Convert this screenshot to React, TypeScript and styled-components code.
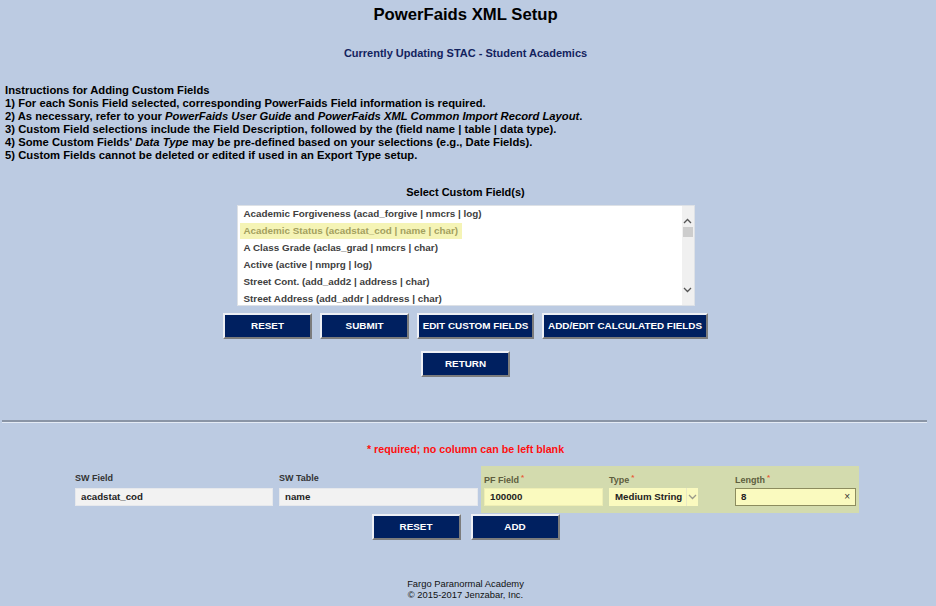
import styled, { createGlobalStyle } from "styled-components";

const GlobalStyle = createGlobalStyle`
  html, body {
    margin: 0;
    padding: 0;
    background: #bccbe2;
  }
  body {
    font-family: "Liberation Sans", Arial, sans-serif;
  }
`;

const Page = styled.div`
  width: 931px;
  min-height: 606px;
  background: #bccbe2;
  padding-top: 5px;
  box-sizing: border-box;
`;

const Title = styled.h1`
  margin: 0;
  text-align: center;
  font-size: 16.7px;
  line-height: 20px;
  font-weight: 700;
  color: #000;
`;

const Subtitle = styled.h2`
  margin: 22px 0 0 0;
  text-align: center;
  font-size: 11px;
  line-height: 13px;
  font-weight: 700;
  color: #13235e;
`;

const Instructions = styled.div`
  margin: 24px 0 0 5px;
  font-size: 11.25px;
  line-height: 13px;
  font-weight: 700;
  color: #000;

  em {
    font-style: italic;
  }
`;

const SectionLabel = styled.div`
  margin-top: 24px;
  text-align: center;
  font-size: 11px;
  line-height: 13px;
  font-weight: 700;
  color: #000;
`;

const ListBox = styled.div`
  margin: 5.5px auto 0;
  width: 458px;
  height: 101px;
  box-sizing: border-box;
  border: 1px solid #dde1e6;
  background: #fff;
  display: flex;
`;

const ListItems = styled.div`
  flex: 1;
  padding: 0 0 0 2px;
`;

const ListItem = styled.div`
  height: 17px;
  display: flex;
  align-items: center;
`;

const ItemText = styled.span<{ $selected?: boolean }>`
  font-size: 9.85px;
  font-weight: 700;
  line-height: 16px;
  padding: 0 4px;
  color: ${(p) => (p.$selected ? "#a3a05e" : "#404040")};
  background: ${(p) => (p.$selected ? "#f5f4b6" : "transparent")};
`;

const ScrollBar = styled.div`
  width: 12px;
  background: #f0f0f0;
  display: flex;
  flex-direction: column;
  align-items: center;
  padding: 12px 0;
  box-sizing: border-box;
`;

const ScrollThumb = styled.div`
  width: 10px;
  height: 10px;
  margin-top: 3px;
  background: #cdcdcd;
`;

const ScrollSpacer = styled.div`
  flex: 1;
`;

const ButtonRow = styled.div<{ $top: number; $gap?: number }>`
  display: flex;
  justify-content: center;
  gap: ${(p) => p.$gap ?? 8}px;
  margin-top: ${(p) => p.$top}px;
`;

const Button = styled.button<{ $w?: number }>`
  width: ${(p) => p.$w ?? 89}px;
  height: 26px;
  box-sizing: border-box;
  padding: 0;
  background: #002060;
  color: #fff;
  font-family: "Liberation Sans", Arial, sans-serif;
  font-size: 9.9px;
  font-weight: 700;
  border-style: solid;
  border-width: 2px;
  border-color: #eef0f5 #7c7c7c #7c7c7c #eef0f5;
  cursor: pointer;
`;

const Rule = styled.hr`
  margin: 43px 4px 0 2px;
  height: 0;
  border: 0;
  border-top: 2px solid #8a95a6;
  border-bottom: 1px solid #e4ebf5;
`;

const Required = styled.div`
  margin-top: 20.5px;
  text-align: center;
  font-size: 10.7px;
  line-height: 13px;
  font-weight: 700;
  color: #ff1010;
`;

const FormGrid = styled.div`
  margin: 9.5px auto 0;
  width: 787px;
  display: grid;
  grid-template-columns: 204px 205px 125px 126px 127px;
`;

const Cell = styled.div<{ $hl?: boolean }>`
  padding: 5px 3px 7px;
  background: ${(p) => (p.$hl ? "#d3dbae" : "transparent")};
  display: flex;
  flex-direction: column;
  gap: 3px;
`;

const Label = styled.div<{ $hl?: boolean }>`
  height: 14px;
  line-height: 14px;
  font-size: 9px;
  font-weight: 700;
  color: ${(p) => (p.$hl ? "#5e5e3e" : "#333")};
`;

const Star = styled.span`
  color: #e8603c;
  font-size: 8px;
  vertical-align: 3px;
  margin-left: 2px;
`;

const Field = styled.div<{ $variant?: "grey" | "yellow" | "boxed" }>`
  height: 18px;
  box-sizing: border-box;
  display: flex;
  align-items: center;
  padding: 0 5px;
  font-size: 9.7px;
  font-weight: 700;
  color: #222;
  background: ${(p) => (p.$variant === "grey" ? "#f2f2f2" : "#fafabf")};
  border: 1px solid
    ${(p) =>
      p.$variant === "boxed"
        ? "#8c8c5e"
        : p.$variant === "grey"
        ? "#e6e8ec"
        : "#eeeeb4"};
`;

const FieldValue = styled.span`
  flex: 1;
  white-space: nowrap;
  overflow: hidden;
`;

const Clear = styled.span`
  font-size: 10px;
  font-weight: 400;
  color: #333;
`;

const Select = styled.div`
  width: 89px;
  height: 18px;
  box-sizing: border-box;
  display: flex;
  background: #fafabf;
  font-size: 9.7px;
  font-weight: 700;
  color: #222;
`;

const SelectText = styled.span`
  flex: 1;
  overflow: hidden;
  white-space: nowrap;
  padding-left: 6px;
  line-height: 18px;
`;

const SelectArrow = styled.span`
  width: 11px;
  border-left: 1px solid #e8e8c4;
  display: flex;
  align-items: center;
  justify-content: center;
`;

const Footer = styled.div`
  margin-top: 38.5px;
  text-align: center;
  font-size: 9.4px;
  line-height: 11px;
  color: #111;
`;

const Chevron = ({ up, color = "#555" }: { up?: boolean; color?: string }) => (
  <svg width="9" height="6" viewBox="0 0 9 6">
    <path
      d={up ? "M1 5 L4.5 1.5 L8 5" : "M1 1 L4.5 4.5 L8 1"}
      fill="none"
      stroke={color}
      strokeWidth="1.3"
    />
  </svg>
);

const customFields = [
  "Academic Forgiveness (acad_forgive | nmcrs | log)",
  "Academic Status (acadstat_cod | name | char)",
  "A Class Grade (aclas_grad | nmcrs | char)",
  "Active (active | nmprg | log)",
  "Street Cont. (add_add2 | address | char)",
  "Street Address (add_addr | address | char)",
];

export default function App() {
  return (
    <Page>
      <GlobalStyle />
      <Title>PowerFaids XML Setup</Title>
      <Subtitle>Currently Updating STAC - Student Academics</Subtitle>

      <Instructions>
        Instructions for Adding Custom Fields
        <br />
        1) For each Sonis Field selected, corresponding PowerFaids Field information is required.
        <br />
        2) As necessary, refer to your <em>PowerFaids User Guide</em> and{" "}
        <em>PowerFaids XML Common Import Record Layout</em>.
        <br />
        3) Custom Field selections include the Field Description, followed by the (field name | table | data type).
        <br />
        4) Some Custom Fields' <em>Data Type</em> may be pre-defined based on your selections (e.g., Date Fields).
        <br />
        5) Custom Fields cannot be deleted or edited if used in an Export Type setup.
      </Instructions>

      <SectionLabel>Select Custom Field(s)</SectionLabel>
      <ListBox>
        <ListItems>
          {customFields.map((f, i) => (
            <ListItem key={f}>
              <ItemText $selected={i === 1}>{f}</ItemText>
            </ListItem>
          ))}
        </ListItems>
        <ScrollBar>
          <Chevron up />
          <ScrollThumb />
          <ScrollSpacer />
          <Chevron />
        </ScrollBar>
      </ListBox>

      <ButtonRow $top={7}>
        <Button>RESET</Button>
        <Button>SUBMIT</Button>
        <Button $w={117}>EDIT CUSTOM FIELDS</Button>
        <Button $w={166}>ADD/EDIT CALCULATED FIELDS</Button>
      </ButtonRow>
      <ButtonRow $top={12}>
        <Button>RETURN</Button>
      </ButtonRow>

      <Rule />

      <Required>* required; no column can be left blank</Required>

      <FormGrid>
        <Cell>
          <Label>SW Field</Label>
          <Field $variant="grey">
            <FieldValue>acadstat_cod</FieldValue>
          </Field>
        </Cell>
        <Cell>
          <Label>SW Table</Label>
          <Field $variant="grey">
            <FieldValue>name</FieldValue>
          </Field>
        </Cell>
        <Cell $hl>
          <Label $hl>
            PF Field<Star>*</Star>
          </Label>
          <Field $variant="yellow">
            <FieldValue>100000</FieldValue>
          </Field>
        </Cell>
        <Cell $hl>
          <Label $hl>
            Type<Star>*</Star>
          </Label>
          <Select>
            <SelectText>Medium String</SelectText>
            <SelectArrow>
              <Chevron color="#9a9a8a" />
            </SelectArrow>
          </Select>
        </Cell>
        <Cell $hl>
          <Label $hl>
            Length<Star>*</Star>
          </Label>
          <Field $variant="boxed">
            <FieldValue>8</FieldValue>
            <Clear>×</Clear>
          </Field>
        </Cell>
      </FormGrid>

      <ButtonRow $top={1} $gap={10}>
        <Button>RESET</Button>
        <Button>ADD</Button>
      </ButtonRow>

      <Footer>
        Fargo Paranormal Academy
        <br />© 2015-2017 Jenzabar, Inc.
      </Footer>
    </Page>
  );
}
